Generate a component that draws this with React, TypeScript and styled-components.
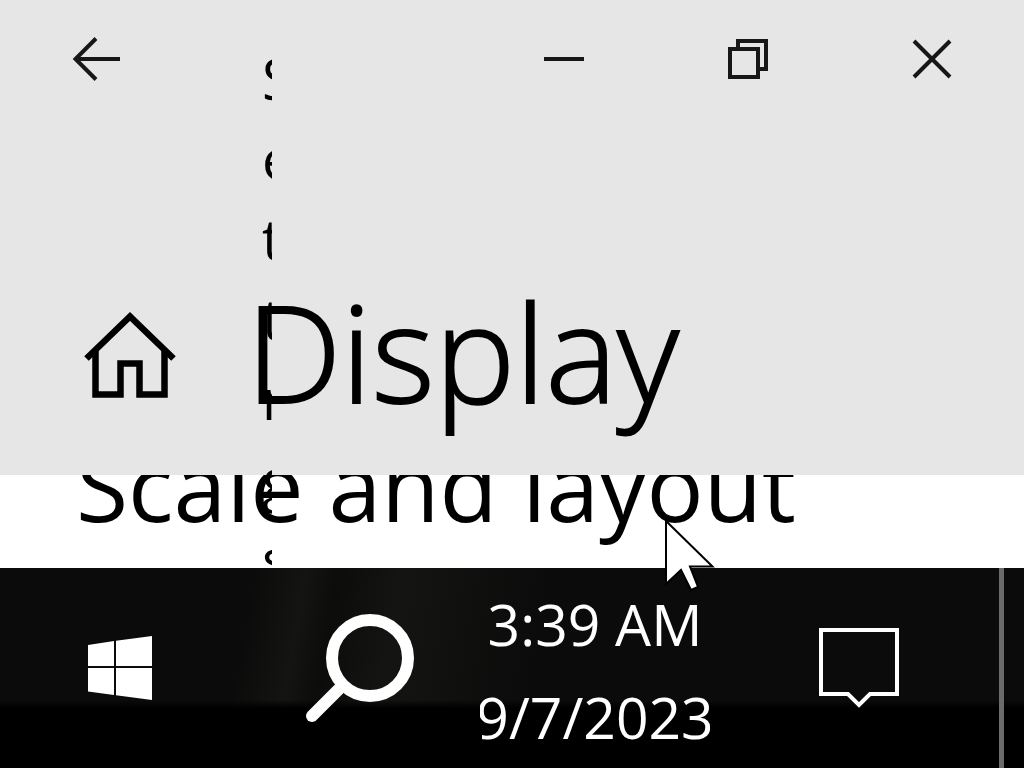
import React from "react";
import styled, { createGlobalStyle } from "styled-components";

const Global = createGlobalStyle`
  * { box-sizing: border-box; }
  body {
    margin: 0;
    background: #fff;
    color: #000;
    font-family: "Open Sans", "Noto Sans", sans-serif;
  }
  svg { display: block; }
`;

const Screen = styled.div`
  position: relative;
  display: flex;
  flex-direction: column;
  min-height: 100vh;
  overflow: hidden;
`;

const SettingsHeader = styled.header`
  display: flex;
  flex-direction: column;
  padding-bottom: 28px;
  background: #e6e6e6;
`;

const TitleBar = styled.div`
  display: flex;
  justify-content: space-between;
  height: 118px;
  color: #171717;
`;

const WindowControls = styled.div`
  display: flex;
`;

const IconButton = styled.button<{ $width?: number }>`
  display: flex;
  align-items: center;
  justify-content: center;
  width: ${(p) => (p.$width ? `${p.$width}px` : "100%")};
  padding: 0;
  border: 0;
  background: none;
  color: inherit;
  font: inherit;
`;

const Heading = styled.div`
  display: flex;
  align-items: center;
  gap: 70px;
  margin-top: 137px;
  padding-left: 84px;
`;

const HomeLink = styled.a`
  padding-top: 8px;
  color: #000;
`;

const PageTitle = styled.h1`
  margin: 0;
  font-size: 135px;
  line-height: 192px;
  font-weight: 300;
  -webkit-text-stroke: 2px #000;
`;

const Content = styled.main`
  flex: 1 0 93px;
  display: flex;
  align-items: flex-end;
  height: 93px;
  padding: 0 76px 19px;
  overflow: hidden;
`;

const SectionTitle = styled.h2`
  margin: 0;
  font-size: 95px;
  line-height: 128px;
  font-weight: 400;
  white-space: nowrap;
`;

const AppName = styled.div`
  position: absolute;
  left: 262px;
  top: 0;
  bottom: 200px;
  width: 10px;
  padding-top: 38px;
  overflow: hidden;
  font-size: 56px;
  line-height: 80px;
`;

const AppNameLine = styled.span`
  display: block;
`;

const Taskbar = styled.footer`
  display: grid;
  grid-template-columns: 240fr 240fr 230px 289fr 5px 20px;
  align-items: center;
  height: 200px;
  color: #fff;
  background:
    linear-gradient(transparent 132px, #000 140px),
    linear-gradient(100deg, transparent 24%, #141412 29%, #0c0c0b 32%, #141412 38%, #111110 43%, transparent 52%),
    #0b0b0b;
`;

const Clock = styled.button`
  display: flex;
  flex-direction: column;
  align-items: center;
  padding: 6px 0 0;
  border: 0;
  background: none;
  color: inherit;
  overflow: hidden;
  font-family: inherit;
  font-size: 57px;
  line-height: 93px;
  white-space: nowrap;
`;

const ActionSlot = styled.div`
  padding-left: 8px;
`;

const ShowDesktop = styled.button`
  align-self: stretch;
  padding: 0;
  border: 0;
  background: #6b6b6b;
`;

const Pointer = styled.svg`
  position: absolute;
  left: 664px;
  bottom: 176px;
  pointer-events: none;
`;

const APP_NAME_LINES = ["S", "e", "t", "ti", "n", "g", "s"];

export default function App() {
  return (
    <>
      <Global />
      <Screen>
        <SettingsHeader>
          <TitleBar>
            <IconButton $width={192} aria-label="Back">
              <svg width="48" height="44" viewBox="0 0 48 44" fill="none" stroke="currentColor" strokeWidth="4">
                <path d="M48 22H4M24 1.500L3.500 22L24 42.500" />
              </svg>
            </IconButton>
            <WindowControls>
              <IconButton $width={184} aria-label="Minimize">
                <svg width="40" height="40" viewBox="0 0 40 40" stroke="currentColor" strokeWidth="4">
                  <path d="M0 20H40" />
                </svg>
              </IconButton>
              <IconButton $width={184} aria-label="Restore">
                <svg width="40" height="40" viewBox="0 0 40 40" fill="none" stroke="currentColor" strokeWidth="4">
                  <path d="M2 10H30V38H2ZM10 10V2H38V30H30" />
                </svg>
              </IconButton>
              <IconButton $width={184} aria-label="Close">
                <svg width="40" height="40" viewBox="0 0 40 40" stroke="currentColor" strokeWidth="4">
                  <path d="M2 2L38 38M38 2L2 38" />
                </svg>
              </IconButton>
            </WindowControls>
          </TitleBar>
          <Heading>
            <HomeLink href="#home" aria-label="Home">
              <svg width="92" height="88" viewBox="0 0 92 88" fill="none" stroke="currentColor" strokeWidth="6.500">
                <path d="M2.500 47.500L46 5.500L89.500 47.500" />
                <path d="M11.500 39V83.500H36.500V52.500H55.500V83.500H80.500V39" />
              </svg>
            </HomeLink>
            <PageTitle>Display</PageTitle>
          </Heading>
        </SettingsHeader>
        <Content>
          <SectionTitle>Scale and layout</SectionTitle>
        </Content>
        <Taskbar>
          <IconButton aria-label="Start">
            <svg width="64" height="64" viewBox="0 0 64 64" fill="currentColor">
              <path d="M0 9L26 5V30H0ZM28 4.700L64 0V30H28ZM0 32H26V59L0 55.500ZM28 32H64V64L28 59.300Z" />
            </svg>
          </IconButton>
          <IconButton aria-label="Search">
            <svg width="108" height="108" viewBox="0 0 108 108" fill="none" stroke="currentColor">
              <circle cx="64" cy="44" r="38" strokeWidth="12" />
              <path d="M36 72L6 102" strokeWidth="12" strokeLinecap="round" />
            </svg>
          </IconButton>
          <Clock>
            <span>3:39 AM</span>
            <span>9/7/2023</span>
          </Clock>
          <ActionSlot>
            <IconButton aria-label="Notifications">
              <svg width="80" height="80" viewBox="0 0 80 80" fill="none" stroke="currentColor" strokeWidth="4">
                <path d="M2 2H78V66H51L40 77L29 66H2Z" />
              </svg>
            </IconButton>
          </ActionSlot>
          <ShowDesktop aria-label="Show desktop" />
        </Taskbar>
        <AppName>
          {APP_NAME_LINES.map((line, i) => (
            <AppNameLine key={i}>{line}</AppNameLine>
          ))}
        </AppName>
        <Pointer width="52" height="74" viewBox="0 0 52 74">
          <path
            d="M2 3L48.500 48.500H26L34 69L27 72L17 52L2 66Z"
            fill="#fff"
            stroke="#000"
            strokeWidth="2"
          />
        </Pointer>
      </Screen>
    </>
  );
}
